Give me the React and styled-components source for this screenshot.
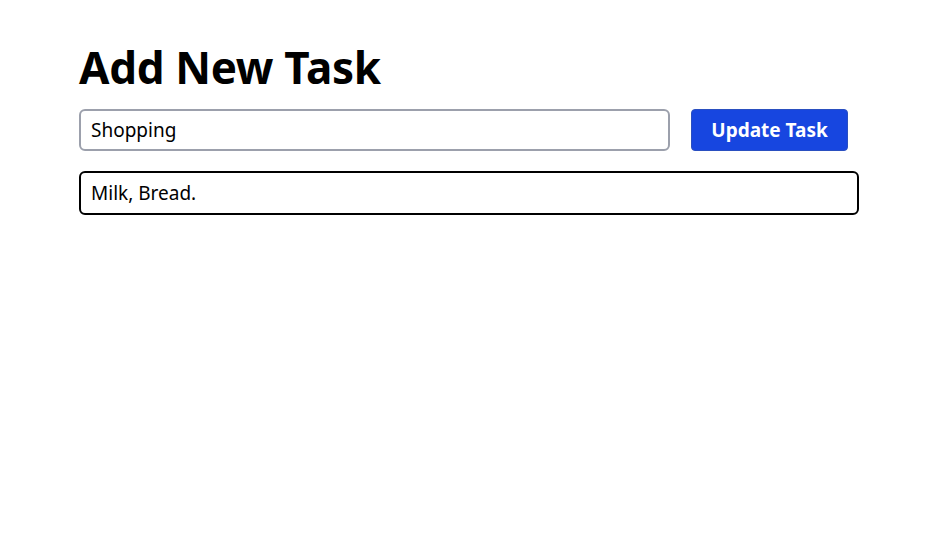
import React, { useState } from "react";
import styled, { createGlobalStyle } from "styled-components";

const GlobalStyle = createGlobalStyle`
  body {
    margin: 0;
    background: #ffffff;
    font-family: "Noto Sans", "Open Sans", sans-serif;
    color: #000000;
  }
`;

const Page = styled.div`
  padding: 39px 0 0 79px;
  width: 780px;
`;

const Title = styled.h1`
  margin: 0 0 14px;
  font-size: 44px;
  line-height: 56px;
  font-weight: 700;
  letter-spacing: -0.3px;
`;

const Row = styled.div`
  display: flex;
  align-items: center;
  gap: 21px;
  margin-bottom: 20px;
`;

const Field = styled.input`
  box-sizing: border-box;
  width: ${(p) => p.$width || "100%"};
  height: ${(p) => p.$height || "42px"};
  padding: 0 10px;
  border: 2px solid ${(p) => (p.$active ? "#000000" : "#9ca0ac")};
  border-radius: 6px;
  font-family: inherit;
  font-size: 19px;
  color: #000000;
  background: #ffffff;
  outline: none;
  caret-color: #000000;
`;

const Button = styled.button`
  box-sizing: border-box;
  height: 42px;
  width: 157px;
  border: 1px solid #2a4fc0;
  border-radius: 4px;
  background: #1746e0;
  color: #ffffff;
  font-family: inherit;
  font-size: 19px;
  font-weight: 700;
  cursor: pointer;
`;

export default function App() {
  const [title, setTitle] = useState("Shopping");
  const [details, setDetails] = useState("Milk, Bread.");

  return (
    <Page>
      <GlobalStyle />
      <Title>Add New Task</Title>
      <Row>
        <Field
          $width="591px"
          value={title}
          onChange={(e) => setTitle(e.target.value)}
        />
        <Button>Update Task</Button>
      </Row>
      <Field
        $active
        $height="44px"
        autoFocus
        value={details}
        onChange={(e) => setDetails(e.target.value)}
      />
    </Page>
  );
}
